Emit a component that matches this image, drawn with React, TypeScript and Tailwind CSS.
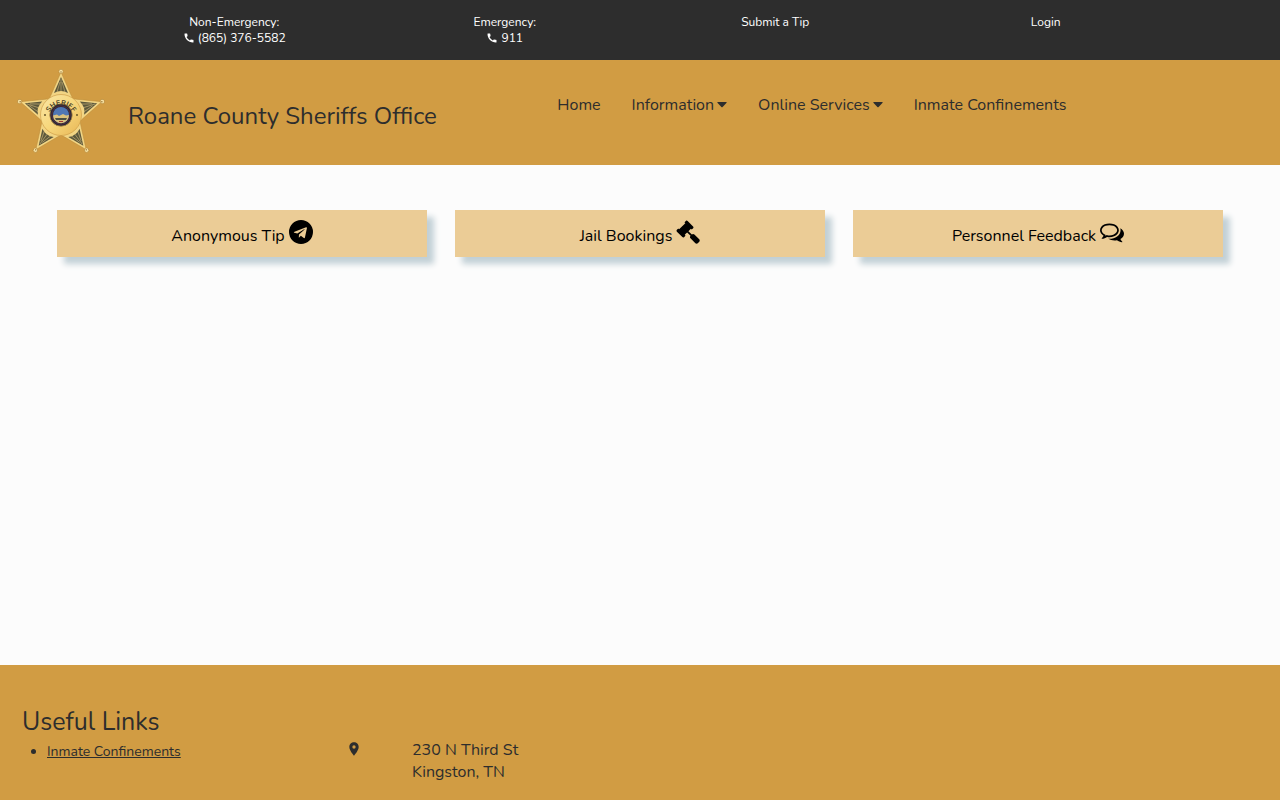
import { ReactNode } from 'react';
import { MdCall, MdLocationOn } from 'react-icons/md';

const navItems = [
    { label: 'Home', hasMenu: false },
    { label: 'Information', hasMenu: true },
    { label: 'Online Services', hasMenu: true },
    { label: 'Inmate Confinements', hasMenu: false },
];

const TELEGRAM =
    'M1189 1307l147-693q9-44-10.5-63t-51.5-7l-864 333q-29 11-39.5 25t-2.5 26.5 32 19.5l221 69 513-323q21-14 32-6 7 5-4 15l-415 375-16 228q23 0 45-22l108-104 224 165q64 36 81-38zm603-411q0 182-71 348t-191 286-286 191-348 71-348-71-286-191-191-286-71-348 71-348 191-286 286-191 348-71 348 71 286 191 191 286 71 348z';
const GAVEL =
    'M1771 1536q0 53-37 90l-107 108q-39 37-91 37-53 0-90-37l-363-364q-38-36-38-90 0-53 43-96l-256-256-126 126q-14 14-34 14t-34-14q2 2 12.5 12t12.5 13 10 11.5 10 13.5 6 13.5 5.5 16.5 1.5 18q0 38-28 68-3 3-16.5 18t-19 20.5-18.5 16.5-22 15.5-22 9-26 4.5q-40 0-68-28l-408-408q-28-28-28-68 0-13 4.5-26t9-22 15.5-22 16.5-18.5 20.5-19 18-16.5q30-28 68-28 10 0 18 1.5t16.5 5.5 13.5 6 13.5 10 11.5 10 13 12.5 12 12.5q-14-14-14-34t14-34l348-348q14-14 34-14t34 14q-2-2-12.5-12t-12.5-13-10-11.5-10-13.5-6-13.5-5.5-16.5-1.5-18q0-38 28-68 3-3 16.5-18t19-20.5 18.5-16.5 22-15.5 22-9 26-4.5q40 0 68 28l408 408q28 28 28 68 0 13-4.5 26t-9 22-15.5 22-16.5 18.5-20.5 19-18 16.5q-30 28-68 28-10 0-18-1.5t-16.5-5.5-13.5-6-13.5-10-11.5-10-13-12.5-12-12.5q14 14 14 34t-14 34l-126 126 256 256q43-43 96-43 52 0 91 37l363 363q37 39 37 91z';
const COMMENTS =
    'M704 384q-153 0-286 52t-211.5 141-78.5 191q0 82 53 158t149 132l97 56-35 84q34-20 62-39l44-31 53 10q78 14 153 14 153 0 286-52t211.5-141 78.5-191-78.5-191-211.5-141-286-52zm0-128q191 0 353.5 68.5t256.5 186.5 94 257-94 257-256.5 186.5-353.5 68.5q-86 0-176-16-124 88-278 128-36 9-86 16h-3q-11 0-20.5-8t-11.5-21q-1-3-1-6.5t.5-6.5 2-6l2.5-5 3.5-5.5 4-5 4.5-5 4-4.5q5-6 23-25t26-29.5 22.5-29 25-38.5 20.5-44q-124-72-195-177t-71-224q0-139 94-257t256.5-186.5 353.5-68.5zm822 1169q10 24 20.5 44t25 38.5 22.5 29 26 29.5 23 25q1 1 4 4.5t4.5 5 4 5 3.5 5.5l2.5 5 2 6 .5 6.5-1 6.5q-3 14-13 22t-22 7q-50-7-86-16-154-40-278-128-90 16-176 16-271 0-472-132 58 4 88 4 161 0 309-45t264-129q125-92 192-212t67-254q0-77-23-152 129 71 204 178t75 230q0 120-71 224.5t-195 176.5z';

const actions = [
    { label: 'Anonymous Tip', icon: TELEGRAM },
    { label: 'Jail Bookings', icon: GAVEL },
    { label: 'Personnel Feedback', icon: COMMENTS },
];

function Badge() {
    const points = [0, 72, 144, 216, 288];

    return (
        <svg viewBox="-50 -50 100 100" className="w-[100px] h-[100px] flex-shrink-0" role="img" aria-label="Sheriff badge">
            <defs>
                <linearGradient id="gold" x1="0" y1="0" x2="1" y2="1">
                    <stop offset="0" stopColor="#f9e7a6" />
                    <stop offset="0.5" stopColor="#f7d77c" />
                    <stop offset="1" stopColor="#e8b655" />
                </linearGradient>
                <path id="arc" d="M-13 3 A13 13 0 1 1 13 3" />
            </defs>
            {points.map((angle) => (
                <g key={angle} transform={`rotate(${angle})`}>
                    <path d="M0 -43 L10 -20 L13 -14 L-13 -14 L-10 -20 Z" fill="#f2d584" stroke="#b98a39" strokeWidth="0.5" />
                    <path d="M0 -38 L7 -22 Q0 -26 -7 -22 Z" fill="#5b583c" />
                    <path d="M0 -36 V-24 M-1 -33 L-4 -23 M1 -33 L4 -23" stroke="#cfb67a" strokeWidth="0.6" />
                    <circle cy="-43.5" r="2.2" fill="#f8e3a4" stroke="#a87a2c" strokeWidth="0.5" />
                    <circle cy="-43" r="0.7" fill="#96702f" />
                </g>
            ))}
            <circle r="20.5" fill="url(#gold)" stroke="#c9963f" strokeWidth="0.6" />
            <circle r="11.2" fill="#25263a" stroke="#b0853c" strokeWidth="0.8" />
            <circle r="9.2" fill="none" stroke="#6f343a" strokeWidth="0.7" />
            <circle r="8" fill="#5077b4" />
            <path d="M-8 0.5 L-4 -0.5 L-2 1 L2 -1 L5 0.5 L8 0 A8 8 0 0 1 -8 0.5 Z" fill="#dcc27c" />
            <path d="M-6 3 H6 L5 5 H-5 Z" fill="#4b5044" />
            <path d="M-2 6.5 H2" stroke="#a23b32" strokeWidth="1" />
            <circle cx="-16" cy="0" r="0.9" fill="#5b4a22" />
            <circle cx="16" cy="0" r="0.9" fill="#5b4a22" />
            <text fill="#4a4327" fontSize="7" fontWeight="700" textAnchor="middle">
                <textPath href="#arc" startOffset="50%">SHERIFF</textPath>
            </text>
        </svg>
    );
}

function ContactItem({ label, phone }: { label: string; phone: string }) {
    return (
        <div>
            <div>{label}</div>
            <a href={`tel:${phone}`} className="inline-flex items-center gap-[3px]">
                <MdCall className="w-3 h-3" />
                {phone}
            </a>
        </div>
    );
}

function NavLink({ label, hasMenu }: { label: string; hasMenu: boolean }) {
    return (
        <a href="#" className="flex items-center gap-[3px] whitespace-nowrap">
            {label}
            {hasMenu && (
                <svg viewBox="0 0 10 6" className="w-[10px] h-[6px]" fill="currentColor">
                    <path d="M0.9 0 H9.1 Q10.2 0.2 9.4 1.1 L5.6 5 Q5 5.6 4.4 5 L0.6 1.1 Q-0.2 0.2 0.9 0 Z" />
                </svg>
            )}
        </a>
    );
}

function ActionCard({ icon, children }: { icon: string; children: ReactNode }) {
    return (
        <a
            href="#"
            className="flex justify-center gap-1 h-[47px] bg-[#ebcc96] text-black shadow-[7px_7px_6px_0_#c2d0d6]"
        >
            <span className="pt-[15px] leading-[22px]">{children}</span>
            <svg viewBox="0 0 1792 1792" className="w-6 h-6 mt-[10px]" fill="currentColor">
                <path d={icon} />
            </svg>
        </a>
    );
}

export default function App() {
    return (
        <div className="min-h-screen flex flex-col bg-[#fcfcfc] text-[#2d2d2d] text-[16px] font-[Nunito,Lato,sans-serif]">
            {/* Contact bar */}
            <div className="bg-[#2d2d2d] text-white text-[12px] leading-4 px-[99px] pt-[14px] h-[60px] grid grid-cols-4 text-center">
                <ContactItem label="Non-Emergency:" phone="(865) 376-5582" />
                <ContactItem label="Emergency:" phone="911" />
                <a href="#">Submit a Tip</a>
                <a href="#">Login</a>
            </div>

            {/* Header */}
            <header className="bg-[#d19c43] h-[105px] flex">
                <div className="w-5/12 flex items-center pl-[11px] pt-1 gap-[17px]">
                    <Badge />
                    <h1 className="text-[24px] leading-8 pt-[2px] whitespace-nowrap">Roane County Sheriffs Office</h1>
                </div>
                <nav className="flex gap-[31px] pl-6 pt-[33px] leading-6 h-[57px]">
                    {navItems.map((item) => (
                        <NavLink key={item.label} label={item.label} hasMenu={item.hasMenu} />
                    ))}
                </nav>
            </header>

            {/* Quick actions */}
            <main className="flex-1 px-[57px] pt-[45px]">
                <div className="grid grid-cols-3 gap-7">
                    {actions.map((action) => (
                        <ActionCard key={action.label} icon={action.icon}>
                            {action.label}
                        </ActionCard>
                    ))}
                </div>
            </main>

            {/* Footer */}
            <footer className="bg-[#d19c43] flex pt-[41px] pb-[17px]">
                <div className="w-1/4 pl-[22px]">
                    <h2 className="text-[25px] leading-8">Useful Links</h2>
                    <ul className="list-disc pl-[25px] text-[14px] leading-7">
                        <li>
                            <a href="#" className="underline">Inmate Confinements</a>
                        </li>
                    </ul>
                </div>
                <div className="flex items-start gap-[50px] pl-[26px] pt-[33px]">
                    <MdLocationOn className="w-4 h-4 mt-[2px]" />
                    <address className="not-italic leading-[22px]">
                        230 N Third St
                        <br />
                        Kingston, TN
                    </address>
                </div>
            </footer>
        </div>
    );
}
